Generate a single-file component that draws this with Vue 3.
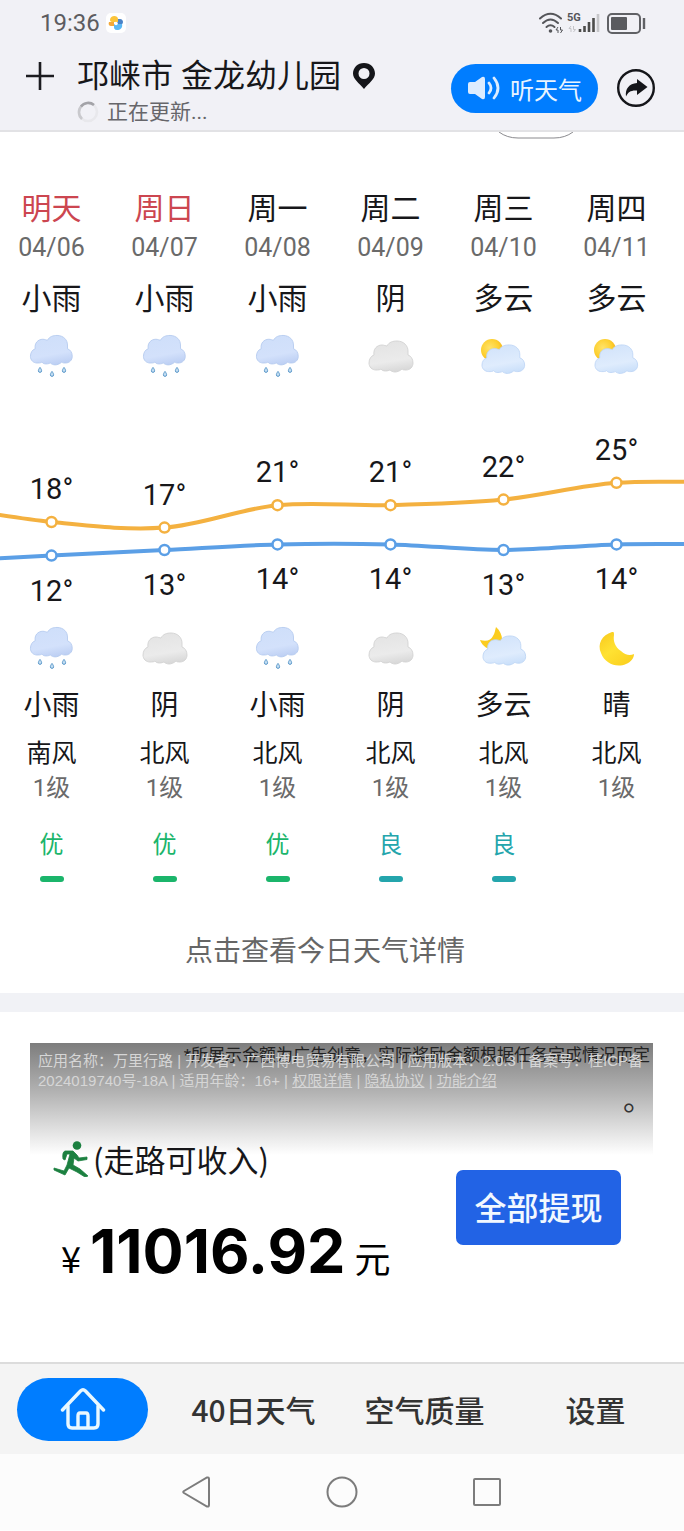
<template>
  <div class="weather-page">
    <!-- Shared icon shapes -->
    <svg class="sprite" width="0" height="0" aria-hidden="true">
      <defs>
        <linearGradient id="rainFill" gradientUnits="userSpaceOnUse" x1="20" y1="2" x2="26" y2="34">
          <stop offset="0" stop-color="#cfdffa" />
          <stop offset="0.6" stop-color="#d3e1fb" />
          <stop offset="1" stop-color="#b9ccf2" />
        </linearGradient>
        <linearGradient id="greyFill" gradientUnits="userSpaceOnUse" x1="20" y1="2" x2="25" y2="34">
          <stop offset="0" stop-color="#e4e4e4" />
          <stop offset="0.6" stop-color="#ebebeb" />
          <stop offset="1" stop-color="#d4d4d4" />
        </linearGradient>
        <linearGradient id="blueFill" gradientUnits="userSpaceOnUse" x1="20" y1="2" x2="26" y2="34">
          <stop offset="0" stop-color="#d3e4fb" />
          <stop offset="0.6" stop-color="#dfecfd" />
          <stop offset="1" stop-color="#c6ddf9" />
        </linearGradient>
        <radialGradient id="sunFill" cx="0.4" cy="0.4" r="0.65">
          <stop offset="0" stop-color="#ffe36a" />
          <stop offset="0.65" stop-color="#fdcf2e" />
          <stop offset="1" stop-color="#f3ad17" />
        </radialGradient>
        <linearGradient id="moonFill" x1="0" y1="0" x2="0.8" y2="1">
          <stop offset="0" stop-color="#f8c81c" />
          <stop offset="0.5" stop-color="#ffe233" />
          <stop offset="1" stop-color="#fbd01f" />
        </linearGradient>
        <path id="cloudShape" d="M8 30C4 30 1 27 1 23C1 19 3 16 6 15C5 9 9 5 14 5C16 5 18 6 19 6C21 2 25 1 29 1C36 1 40 6 40 11L40 15C43 16 45 19 45 23C45 27 42 30 38 30C36 30 35 30 34 29C32 31 29 32 27 32C25 32 23 31 22 30C20 31 15 32 13 29C12 30 10 30 8 30Z" />
        <path id="drop" d="M0 -2.6C1.2 -1 1.6 0 1.6 .8A1.6 1.6 0 0 1 -1.6 .8C-1.6 0 -1.2 -1 0 -2.6Z" />
      </defs>
      <symbol id="icon-rain" viewBox="0 0 48 48">
        <use href="#cloudShape" transform="translate(1.5 2.5) scale(.95)" fill="url(#rainFill)" stroke="#b3c9ef" stroke-width=".9" />
        <g fill="#c5dff3" stroke="#4d8fc4" stroke-width=".9">
          <use href="#drop" x="12" y="38" />
          <use href="#drop" x="24" y="42" />
          <use href="#drop" x="36" y="38" />
        </g>
      </symbol>
      <symbol id="icon-overcast" viewBox="0 0 48 48">
        <use href="#cloudShape" transform="translate(1 8)" fill="url(#greyFill)" stroke="#d3d3d3" stroke-width=".9" />
      </symbol>
      <symbol id="icon-sun-cloud" viewBox="0 0 48 48">
        <circle cx="12" cy="18" r="11" fill="url(#sunFill)" />
        <use href="#cloudShape" transform="translate(1 12) scale(.97 .92)" fill="url(#blueFill)" stroke="#bdd5f5" stroke-width=".9" />
      </symbol>
      <symbol id="icon-moon-cloud" viewBox="0 0 48 48">
        <path d="M16 3C24 10 24 22 17 25C11 27 3 24 0 16C7 18 11 16 13 12C15 9 15 6 16 3Z" fill="#fbcc1f" />
        <use href="#cloudShape" transform="translate(2 11) scale(.97 .94)" fill="url(#blueFill)" stroke="#bdd5f5" stroke-width=".9" />
      </symbol>
      <symbol id="icon-moon" viewBox="0 0 48 48">
        <path d="M19 8C9 11 4 20 8 29C12 40 24 44 33 40C38 38 41 34 41 30C37 32 32 31 28 27C22 23 20 17 21 11C21 8 21 8 19 8Z" fill="url(#moonFill)" />
      </symbol>
    </svg>

    <header class="top">
      <div class="status-bar">
        <span class="clock">19:36</span>
        <svg class="app-badge" width="20" height="20" viewBox="0 0 20 20">
          <rect width="20" height="20" rx="5" fill="#fff" />
          <path d="M4 7C4 2 12 2 12 6V9H7C5 9 4 8.500 4 7Z" fill="#fbc43a" />
          <path d="M12 6H14C18 6 18 12 14 12H10V9H12Z" fill="#4a83c8" />
          <path d="M8 11H16C17 15 14 17 11 17C8.500 17 8 15 8 14Z" fill="#5ab8f5" />
          <path d="M3 9H8V13H5C3 13 2 11 3 9Z" fill="#f4a83a" />
          <circle cx="10" cy="10.500" r="1.800" fill="#fff" />
        </svg>
        <svg class="status-icons" width="108" height="24" viewBox="0 0 108 24">
          <g fill="none" stroke="#55565a" stroke-width="2" stroke-linecap="round">
            <path d="M2 7.500Q12.500 -2 23 7.500" />
            <path d="M5 12Q12.500 5 20 12" />
            <path d="M8.500 16Q12.500 12.500 16.500 16" />
          </g>
          <circle cx="12.500" cy="20" r="1.800" fill="#55565a" />
          <path d="M20 16L18 19H20V22M22.500 22L24.500 19H22.500V16" fill="none" stroke="#55565a" />
          <text class="network" x="29" y="10">5G</text>
          <path d="M33 15L31 17.500H33V21M35.500 21L37.500 18.500H35.500V15" fill="none" stroke="#c3c3c7" />
          <path d="M42 18V21M46.500 15V21M51 11V21M55.500 7V21" stroke="#4d4d4b" stroke-width="2.600" />
          <path d="M60 3V21" stroke="#c6c6c9" stroke-width="2.600" />
          <rect x="70" y="3" width="32" height="19" rx="4" fill="none" stroke="#606165" stroke-width="2" />
          <rect x="73" y="6" width="16" height="13" rx="1" fill="#5a5b5f" />
          <path d="M106 7V18" stroke="#606165" stroke-width="2.400" />
        </svg>
      </div>

      <div class="title-bar">
        <button class="icon-button add" aria-label="添加城市">
          <svg width="30" height="30" viewBox="0 0 30 30">
            <path d="M15 1V29M1 15H29" stroke="#1c1c20" stroke-width="2.600" />
          </svg>
        </button>
        <div class="place">
          <h1>
            邛崃市 金龙幼儿园
            <svg width="24" height="28" viewBox="0 0 24 28">
              <path fill-rule="evenodd" d="M12 1C5.500 1 1 5.700 1 11.500C1 17 7 21 12 27C17 21 23 17 23 11.500C23 5.700 18.500 1 12 1ZM12 6A5.500 5.500 0 1 1 12 17A5.500 5.500 0 0 1 12 6Z" fill="#15161a" />
            </svg>
          </h1>
          <p class="updating">
            <svg width="22" height="22" viewBox="0 0 22 22" fill="none" stroke-width="2.600">
              <circle cx="11" cy="11" r="9" stroke="#e8e8ec" />
              <path d="M5 18A9 9 0 0 1 5 4.500" stroke="#c9c9cd" />
              <path d="M4 5.500A9 9 0 0 1 17 4" stroke="#a3a3a8" />
            </svg>
            正在更新...
          </p>
        </div>
        <button class="listen">
          <svg width="34" height="26" viewBox="0 0 34 26">
            <path d="M3 7H8L15 2Q18 1 18 4V22Q18 25 15 24L8 19H3Q1 19 1 17V9Q1 7 3 7Z" fill="#dcecff" />
            <path d="M22 8Q26 13 22 18M27 3Q35 13 27 23" fill="none" stroke="#dcecff" stroke-width="2.800" stroke-linecap="round" />
          </svg>
          听天气
        </button>
        <button class="icon-button" aria-label="分享">
          <svg width="40" height="40" viewBox="0 0 40 40">
            <circle cx="20" cy="20" r="17.800" fill="none" stroke="#15161a" stroke-width="2.400" />
            <path d="M21 11L31.500 19L21 27V22.500C15 22 12 24 10 28.500C9 21 13 15.500 21 15Z" fill="#15161a" />
          </svg>
        </button>
      </div>
    </header>

    <main>
      <section class="forecast">
        <svg class="pill-edge" width="76" height="7" viewBox="0 0 76 7">
          <path d="M1 0Q9 6 20 6H56Q67 6 75 0" fill="none" stroke="#8a8a8e" />
        </svg>

        <div class="days">
          <div v-for="d in days" :key="d.date" class="day">
            <span class="name" :class="{ holiday: d.holiday }">{{ d.name }}</span>
            <span class="date">{{ d.date }}</span>
            <span class="condition">{{ d.dayText }}</span>
            <svg class="weather-icon"><use :href="'#icon-' + d.dayIcon" /></svg>
          </div>
        </div>

        <svg class="chart" viewBox="0 0 684 200">
          <path :d="curve(highs)" class="line high" />
          <path :d="curve(lows)" class="line low" />
          <g v-for="(d, i) in days" :key="d.date">
            <circle :cx="px(i)" :cy="py(d.high)" r="5" class="dot high" />
            <circle :cx="px(i)" :cy="py(d.low)" r="5" class="dot low" />
            <text :x="px(i)" :y="py(d.high) - 23">{{ d.high }}°</text>
            <text :x="px(i)" :y="py(d.low) + 45">{{ d.low }}°</text>
          </g>
        </svg>

        <div class="days">
          <div v-for="d in days" :key="d.date" class="day">
            <svg class="weather-icon"><use :href="'#icon-' + d.nightIcon" /></svg>
            <span class="night">{{ d.nightText }}</span>
            <span class="wind">{{ d.wind }}</span>
            <span class="level">1级</span>
            <span v-if="d.air" class="air" :class="{ good: d.air === '良' }">{{ d.air }}</span>
          </div>
        </div>

        <a class="detail" href="#">点击查看今日天气详情</a>
      </section>

      <section class="ad">
        <div class="shade">
          <p class="notice">*所展示金额为广告创意，实际奖励金额根据任务完成情况而定</p>
          <p class="stop">。</p>
          <p class="legal">
            应用名称：万里行路 | 开发者：广西博电贸易有限公司 | 应用版本：2.0.3 | 备案号：桂ICP备<br>
            2024019740号-18A | 适用年龄：16+ | <a href="#">权限详情</a> | <a href="#">隐私协议</a> | <a href="#">功能介绍</a>
          </p>
        </div>
        <div class="reward">
          <div>
            <p class="walk">
              <svg width="36" height="36" viewBox="0 0 36 36">
                <circle cx="24" cy="4.500" r="4.300" fill="#1c8040" />
                <path d="M12 10H20L24 14L26 17L34 16V18.500L25 20L21 17L20 24L27 28L35 35L32 36L24 31L16 27L12 34L1 29V27L11 30L14 24L17 13H14L12 19L10 18Q9 11 12 10Z" fill="#1c8040" stroke="#1c8040" stroke-width=".8" stroke-linejoin="round" />
              </svg>
              (走路可收入)
            </p>
            <p class="amount"><span>¥</span><strong>11016.92</strong><span>元</span></p>
          </div>
          <button class="withdraw">全部提现</button>
        </div>
      </section>
    </main>

    <nav class="tabs">
      <a href="#" class="home" aria-label="首页">
        <svg width="46" height="44" viewBox="0 0 46 44" fill="none" stroke="#e9f8ff" stroke-width="3.400" stroke-linecap="round" stroke-linejoin="round">
          <path d="M2.500 23L20.500 4Q23 1.500 25.500 4L43.500 23" />
          <path d="M8 19V37Q8 41 12 41H34Q38 41 38 37V19" />
          <path d="M18 40V29Q18 26 20 26H26Q28 26 28 29V40" />
        </svg>
      </a>
      <a href="#">40日天气</a>
      <a href="#">空气质量</a>
      <a href="#">设置</a>
    </nav>

    <div class="system-nav">
      <button aria-label="返回">
        <svg width="34" height="34" viewBox="0 0 34 34"><path d="M4 16Q2.500 17 4 18L27 31.500Q29 32 29 30V4Q29 2 27 2.500Z" /></svg>
      </button>
      <button aria-label="主屏幕">
        <svg width="34" height="34" viewBox="0 0 34 34"><circle cx="17" cy="17" r="14.500" /></svg>
      </button>
      <button aria-label="最近任务">
        <svg width="34" height="34" viewBox="0 0 34 34"><rect x="4" y="4" width="26" height="26" rx="1" /></svg>
      </button>
    </div>
  </div>
</template>

<script setup>
const days = [
  { name: '明天', date: '04/06', holiday: true, dayText: '小雨', dayIcon: 'rain', high: 18, low: 12, nightIcon: 'rain', nightText: '小雨', wind: '南风', air: '优' },
  { name: '周日', date: '04/07', holiday: true, dayText: '小雨', dayIcon: 'rain', high: 17, low: 13, nightIcon: 'overcast', nightText: '阴', wind: '北风', air: '优' },
  { name: '周一', date: '04/08', dayText: '小雨', dayIcon: 'rain', high: 21, low: 14, nightIcon: 'rain', nightText: '小雨', wind: '北风', air: '优' },
  { name: '周二', date: '04/09', dayText: '阴', dayIcon: 'overcast', high: 21, low: 14, nightIcon: 'overcast', nightText: '阴', wind: '北风', air: '良' },
  { name: '周三', date: '04/10', dayText: '多云', dayIcon: 'sun-cloud', high: 22, low: 13, nightIcon: 'moon-cloud', nightText: '多云', wind: '北风', air: '良' },
  { name: '周四', date: '04/11', dayText: '多云', dayIcon: 'sun-cloud', high: 25, low: 14, nightIcon: 'moon', nightText: '晴', wind: '北风', air: '' }
]

// the neighbours outside the view, so the lines run off both edges
const highs = [21, ...days.map(d => d.high), 25]
const lows = [11, ...days.map(d => d.low), 14]

const px = i => 51.5 + i * 113
const py = t => 102 - (t - 18) * 5.6

// smooth curve through all the points
const curve = temps => {
  const pts = temps.map((t, i) => [px(i - 1), py(t)])
  let d = `M${pts[0]}`
  for (let i = 0; i < pts.length - 1; i++) {
    const p0 = pts[i - 1] || pts[i]
    const p1 = pts[i]
    const p2 = pts[i + 1]
    const p3 = pts[i + 2] || p2
    const c1 = [p1[0] + (p2[0] - p0[0]) / 6, p1[1] + (p2[1] - p0[1]) / 6]
    const c2 = [p2[0] - (p3[0] - p1[0]) / 6, p2[1] - (p3[1] - p1[1]) / 6]
    d += `C${c1} ${c2} ${p2}`
  }
  return d
}
</script>

<style>
body {
  margin: 0;
  background: #fff;
}
</style>

<style scoped>
.weather-page {
  font-family: Roboto, "Noto Sans CJK SC", sans-serif;
  color: #17171a;
  overflow: hidden;
}

.sprite {
  position: absolute;
}

h1,
p {
  margin: 0;
  font-weight: 400;
}

button {
  padding: 0;
  border: none;
  background: none;
  font-family: inherit;
  color: inherit;
  cursor: pointer;
}

a {
  color: inherit;
  text-decoration: none;
}

svg {
  display: block;
  flex: none;
}

.top {
  background: #f1f1f6;
  border-bottom: 2px solid #e2e2e5;
}

.status-bar {
  display: flex;
  align-items: center;
  height: 46px;
  padding: 0 38px 0 40px;
}

.clock {
  font-size: 24px;
  color: #5c5c60;
}

.app-badge {
  margin-left: 6px;
}

.status-icons {
  margin-left: auto;
}

.network {
  font-size: 11px;
  font-weight: 700;
  fill: #55565a;
}

.title-bar {
  display: flex;
  align-items: center;
  height: 84px;
  padding: 0 28px 0 25px;
}

.add {
  align-self: flex-start;
  margin-top: 15px;
}

.place {
  flex: 1;
  align-self: flex-start;
  margin-left: 22px;
}

.place h1 {
  display: flex;
  align-items: center;
  gap: 11px;
  font-size: 32px;
  line-height: 40px;
  margin-top: 10px;
}

.updating {
  display: flex;
  align-items: center;
  gap: 8px;
  font-size: 21px;
  line-height: 32px;
  color: #66666a;
}

.listen {
  display: flex;
  align-items: center;
  justify-content: center;
  gap: 9px;
  width: 147px;
  height: 49px;
  margin-right: 18px;
  border-radius: 25px;
  background: #007dff;
  color: #e9f4ff;
  font-size: 24px;
}

.forecast {
  border-bottom: 19px solid #f1f2f6;
  padding-bottom: 21px;
}

.pill-edge {
  margin: 0 110px 50px auto;
}

.days {
  display: grid;
  grid-template-columns: repeat(6, 1fr);
  margin: 0 11px 0 -5px;
}

.day {
  display: flex;
  flex-direction: column;
  align-items: center;
}

.name {
  font-size: 30px;
  line-height: 40px;
}

.holiday {
  color: #cc4650;
}

.date {
  font-size: 25px;
  line-height: 38px;
  color: #6a6a6a;
}

.condition {
  font-size: 30px;
  line-height: 40px;
  margin: 12px 0 13px;
}

.weather-icon {
  width: 48px;
  height: 48px;
}

.chart {
  width: 100%;
  height: auto;
  margin: 40px 0 4px;
}

.line {
  fill: none;
  stroke-width: 4;
}

.dot {
  fill: #fff;
  stroke-width: 2.5;
}

.high {
  stroke: #f4b140;
}

.low {
  stroke: #5b9fe6;
}

.chart text {
  font-size: 29px;
  text-anchor: middle;
  fill: #17171a;
}

.night {
  font-size: 28px;
  line-height: 40px;
  margin: 14px 0 11px;
}

.wind {
  font-size: 25px;
  line-height: 34px;
}

.level {
  font-size: 24px;
  line-height: 34px;
  color: #6a6a6a;
}

.air {
  font-size: 24px;
  line-height: 34px;
  margin-top: 23px;
  color: #1bb56b;
}

.air::after {
  content: "";
  display: block;
  width: 24px;
  height: 6px;
  margin-top: 14px;
  border-radius: 3px;
  background: currentColor;
}

.air.good {
  color: #24a5ac;
}

.detail {
  display: block;
  margin: 50px 34px 0 0;
  font-size: 28px;
  line-height: 40px;
  text-align: center;
  color: #666;
}

.ad {
  padding: 31px 31px 69px 30px;
}

.shade {
  position: relative;
  height: 112px;
  background: linear-gradient(#7d7d7d, #b4b4b4 45%, #fff);
}

.notice {
  font-size: 17px;
  line-height: 24px;
  padding-right: 3px;
  text-align: right;
  white-space: nowrap;
  color: #222;
}

.stop {
  font-size: 30px;
  line-height: 66px;
  text-align: right;
  color: #333;
}

.legal {
  position: absolute;
  top: 8px;
  left: 8px;
  font-family: "Liberation Sans", "Noto Sans CJK SC", sans-serif;
  font-size: 15px;
  line-height: 20px;
  white-space: nowrap;
  color: #d6d6d6;
}

.legal a {
  text-decoration: underline;
}

.reward {
  display: flex;
  justify-content: space-between;
  padding: 0 32px 0 23px;
  margin-top: -16px;
  position: relative;
}

.walk {
  display: flex;
  align-items: center;
  gap: 4px;
  font-family: "Noto Sans CJK SC", sans-serif;
  font-size: 31px;
  line-height: 40px;
}

.amount {
  display: flex;
  align-items: baseline;
  gap: 9px;
  margin: 36px 0 0 8px;
  font-family: "Noto Sans CJK SC", sans-serif;
  font-size: 36px;
  line-height: 72px;
  color: #000;
}

.amount strong {
  font-family: Inter, Roboto, sans-serif;
  font-size: 61px;
  font-weight: 700;
}

.withdraw {
  width: 165px;
  height: 75px;
  margin-top: 31px;
  padding-bottom: 3px;
  border-radius: 7px;
  background: #2263e5;
  color: #f2f8ff;
  font-size: 32px;
  font-weight: 500;
}

.tabs {
  display: grid;
  grid-template-columns: repeat(4, 1fr);
  align-items: center;
  justify-items: center;
  height: 90px;
  border-top: 2px solid #dcdcdc;
  background: #f4f4f4;
  font-family: "Noto Sans CJK SC", sans-serif;
  font-size: 30px;
  line-height: 40px;
  font-weight: 500;
  color: #333;
}

.tabs a {
  margin-right: 6px;
}

.home {
  display: flex;
  align-items: center;
  justify-content: center;
  width: 131px;
  height: 63px;
  border-radius: 32px;
  background: #007dff;
}

.system-nav {
  display: flex;
  justify-content: center;
  align-items: center;
  gap: 111px;
  height: 76px;
  background: #fcfcfc;
}

.system-nav svg {
  fill: none;
  stroke: #7c7c7c;
  stroke-width: 2;
}
</style>
